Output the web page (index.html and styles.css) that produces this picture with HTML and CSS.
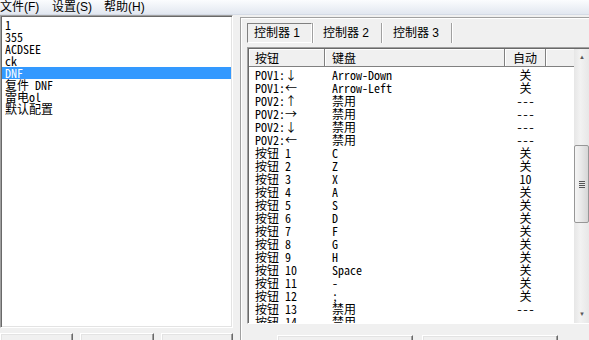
FILE: index.html
```html
<!DOCTYPE html>
<html lang="zh-CN">

<head>
    <meta charset="UTF-8">
    <title>按键映射</title>
    <link rel="stylesheet" href="styles.css">
</head>

<body>
    <div class="menubar">
        <span class="menu-item">文件(F)</span>
        <span class="menu-item">设置(S)</span>
        <span class="menu-item">帮助(H)</span>
    </div>
    <div class="main">
        <div class="left">
            <ul class="profile-list">
                <li>1</li>
                <li>355</li>
                <li>ACDSEE</li>
                <li>ck</li>
                <li class="selected">DNF</li>
                <li>复件 DNF</li>
                <li>雷电ol</li>
                <li>默认配置</li>
            </ul>
            <div class="left-buttons">
                <button></button>
                <button></button>
                <button></button>
            </div>
        </div>
        <div class="right">
            <div class="tabs">
                <div class="tab active"><span>控制器 1</span></div>
                <div class="tab">控制器 2</div>
                <div class="tab">控制器 3</div>
            </div>
            <div class="list-box">
                <div class="list-view">
                    <div class="list-head">
                        <div class="col-btn">按钮</div>
                        <div class="col-key">键盘</div>
                        <div class="col-auto">自动</div>
                        <div class="col-end"></div>
                    </div>
                    <table class="keys">
                        <tr><td>POV1:↓</td><td>Arrow-Down</td><td>关</td></tr>
                        <tr><td>POV1:←</td><td>Arrow-Left</td><td>关</td></tr>
                        <tr><td>POV2:↑</td><td>禁用</td><td>---</td></tr>
                        <tr><td>POV2:→</td><td>禁用</td><td>---</td></tr>
                        <tr><td>POV2:↓</td><td>禁用</td><td>---</td></tr>
                        <tr><td>POV2:←</td><td>禁用</td><td>---</td></tr>
                        <tr><td>按钮 1</td><td>C</td><td>关</td></tr>
                        <tr><td>按钮 2</td><td>Z</td><td>关</td></tr>
                        <tr><td>按钮 3</td><td>X</td><td>10</td></tr>
                        <tr><td>按钮 4</td><td>A</td><td>关</td></tr>
                        <tr><td>按钮 5</td><td>S</td><td>关</td></tr>
                        <tr><td>按钮 6</td><td>D</td><td>关</td></tr>
                        <tr><td>按钮 7</td><td>F</td><td>关</td></tr>
                        <tr><td>按钮 8</td><td>G</td><td>关</td></tr>
                        <tr><td>按钮 9</td><td>H</td><td>关</td></tr>
                        <tr><td>按钮 10</td><td>Space</td><td>关</td></tr>
                        <tr><td>按钮 11</td><td>-</td><td>关</td></tr>
                        <tr><td>按钮 12</td><td>;</td><td>关</td></tr>
                        <tr><td>按钮 13</td><td>禁用</td><td>---</td></tr>
                        <tr><td>按钮 14</td><td>禁用</td><td>---</td></tr>
                    </table>
                </div>
                <div class="scrollbar">
                    <div class="arrow">▲</div>
                    <div class="track">
                        <div class="thumb"><span class="grip"></span></div>
                    </div>
                    <div class="arrow">▼</div>
                </div>
            </div>
            <div class="right-buttons">
                <button></button>
                <button></button>
            </div>
        </div>
    </div>
</body>

</html>
```

FILE: styles.css
```css
body {
    margin: 0;
    padding: 0;
    width: 589px;
    height: 340px;
    overflow: hidden;
    background: #f0f0f0;
    color: #000;
    font-family: "Liberation Sans", "Noto Sans CJK SC", sans-serif;
    font-size: 12px;
}

ul {
    margin: 0;
    padding: 0;
    list-style: none;
}

/* 菜单栏 */
.menubar {
    display: flex;
    height: 14px;
    line-height: 14px;
    border-bottom: 1px solid #d5dbe6;
    background: linear-gradient(#fbfcfe, #e2e7f0);
}

.menu-item {
    width: 52px;
    white-space: nowrap;
}

.main {
    display: flex;
}

/* 左侧配置列表 */
.left {
    width: 233px;
}

.profile-list {
    box-sizing: border-box;
    height: 313px;
    padding-top: 3px;
    background: #fff;
    border: 1px solid;
    border-color: #a0a0a0 #fff #fff #a0a0a0;
    box-shadow: inset 1px 1px #696969, inset -1px -1px #e3e3e3;
    font-family: "Noto Sans Mono CJK SC", "Liberation Mono", "Noto Sans CJK SC", monospace;
}

.profile-list li {
    height: 12px;
    line-height: 12px;
    margin: 0 1px;
    padding-left: 3px;
    white-space: nowrap;
}

.profile-list .selected {
    background: #3399ff;
    color: #fff;
}

/* 底部按钮只露出上沿 */
button {
    box-sizing: border-box;
    height: 7px;
    padding: 0;
    border: 1px solid;
    border-bottom: none;
    border-color: #fff #696969 #696969 #fff;
    box-shadow: inset -1px 0 #a0a0a0, inset 1px 1px #e3e3e3;
    background: #f0f0f0;
}

.left-buttons {
    display: grid;
    grid-template-columns: 73px 74px 72px;
    column-gap: 7px;
    margin-top: 5px;
}

/* 右侧控制器面板 */
.right {
    width: 349px;
    margin: 2px 0 0 7px;
    padding: 5px 0 0 6px;
    border-top: 1px solid #a0a0a0;
    border-left: 1px solid #a0a0a0;
    box-shadow: inset 1px 1px #fff;
}

.tabs {
    display: flex;
    height: 20px;
}

.tab {
    box-sizing: border-box;
    height: 20px;
    line-height: 20px;
    padding-left: 10px;
    border-right: 1px solid #a0a0a0;
    box-shadow: 1px 0 #fff;
    white-space: nowrap;
}

.tab:nth-child(2) {
    width: 69px;
}

.tab:nth-child(3) {
    width: 70px;
    padding-left: 11px;
}

.tab.active {
    width: 66px;
    padding: 0;
}

.tab.active span {
    display: block;
    box-sizing: border-box;
    height: 20px;
    width: 65px;
    padding-left: 6px;
    line-height: 18px;
    border: 1px solid;
    border-color: #808080 #fff #fff #808080;
}

.list-box {
    display: flex;
    box-sizing: border-box;
    width: 345px;
    height: 277px;
    margin-top: 4px;
    background: #fff;
    border: 1px solid;
    border-color: #a0a0a0 #fff #fff #a0a0a0;
    box-shadow: inset 1px 1px #696969;
    padding: 1px 0 0 1px;
    overflow: hidden;
}

.list-view {
    width: 325px;
    overflow: hidden;
    font-family: "Noto Sans Mono CJK SC", "Liberation Mono", "Noto Sans CJK SC", monospace;
}

.list-head {
    display: flex;
    height: 17px;
    line-height: 17px;
    background: #f0f0f0;
    border-bottom: 1px solid #808080;
}

.list-head div {
    box-sizing: border-box;
    height: 17px;
    border-right: 1px solid #808080;
    box-shadow: inset 1px 1px #fff;
}

.col-btn {
    width: 76px;
    padding-left: 6px;
}

.col-key {
    width: 180px;
    padding-left: 7px;
}

.col-auto {
    width: 41px;
    text-align: center;
}

.list-head .col-end {
    width: 28px;
    border-right: none;
}

.keys {
    border-collapse: collapse;
    margin-top: 1px;
}

.keys td {
    height: 13px;
    padding: 0;
    line-height: 13px;
    white-space: nowrap;
}

.keys td:nth-child(1) {
    width: 70px;
    padding-left: 6px;
}

.keys td:nth-child(2) {
    width: 173px;
    padding-left: 7px;
}

.keys td:nth-child(3) {
    width: 41px;
    text-align: center;
}

/* 滚动条 */
.scrollbar {
    display: flex;
    flex-direction: column;
    width: 16px;
    background: linear-gradient(90deg, #e6e6e6, #f2f2f2 40%, #e6e6e6);
}

.arrow {
    height: 17px;
    line-height: 17px;
    text-align: center;
    font-size: 6px;
    color: #5a5a5a;
}

.track {
    flex: 1;
}

.thumb {
    display: flex;
    align-items: center;
    justify-content: center;
    box-sizing: border-box;
    width: 15px;
    height: 78px;
    margin-top: 79px;
    border: 1px solid #979797;
    border-radius: 2px;
    background: linear-gradient(90deg, #f5f5f5, #e8e8e8 50%, #d6d6d6);
}

.grip {
    width: 6px;
    height: 7px;
    background: repeating-linear-gradient(#555 0 1px, #e8e8e8 1px 2px);
}

.right-buttons {
    display: flex;
    gap: 9px;
    margin: 11px 0 0 30px;
}

.right-buttons button {
    width: 136px;
    height: 5px;
}
```
